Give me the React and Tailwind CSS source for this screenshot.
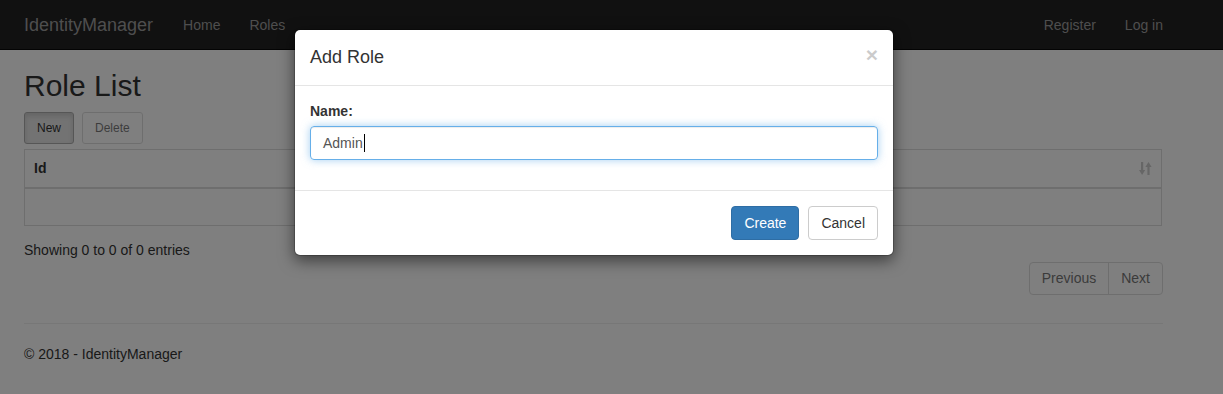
export default function App() {
  return (
    <div className="relative w-[1223px] h-[394px] overflow-hidden bg-white font-['Liberation_Sans',Arial,sans-serif] text-[14px] text-[#333]">
      {/* Navbar */}
      <div className="h-[50px] bg-[#222] border-b border-[#080808] flex items-center justify-between pl-[24px] pr-[60px]">
        <div className="flex items-center">
          <span className="text-[18px] leading-[20px] text-[#9d9d9d]">IdentityManager</span>
          <div className="flex items-center gap-[29px] ml-[30px] text-[14px] leading-[20px] text-[#9d9d9d]">
            <span>Home</span>
            <span>Roles</span>
          </div>
        </div>
        <div className="flex items-center gap-[29px] text-[14px] leading-[20px] text-[#9d9d9d]">
          <span>Register</span>
          <span>Log in</span>
        </div>
      </div>

      {/* Content */}
      <div className="pl-[24px] pr-[60px]">
        <h2 className="mt-[19px] text-[30px] leading-[33px] font-medium text-[#333]">Role List</h2>
        <div className="mt-[10px] flex gap-[8px]">
          <div className="h-[32px] px-[12px] flex items-center text-[12px] border border-[#adadad] rounded-[3px] bg-[#e6e6e6] shadow-[inset_0_3px_5px_rgba(0,0,0,0.125)] text-[#333]">New</div>
          <div className="h-[32px] px-[12px] flex items-center text-[12px] border border-[#ccc] rounded-[3px] bg-white text-[#333] opacity-65">Delete</div>
        </div>
        <div className="mt-[5px] mr-[1px] border border-[#ddd]">
          <div className="h-[39px] border-b-2 border-[#ddd] flex items-center justify-between pl-[9px] pr-[9px]">
            <span className="font-bold">Id</span>
            <svg width="13" height="15" viewBox="0 0 13 15" className="text-[#ccc]">
              <g fill="currentColor">
                <rect x="2" y="1" width="2.2" height="10" />
                <polygon points="0,9 6.2,9 3.1,14" />
                <rect x="8.4" y="4" width="2.2" height="10" />
                <polygon points="6.4,6 12.6,6 9.5,1" />
              </g>
            </svg>
          </div>
          <div className="h-[36px]"></div>
        </div>
        <div className="mt-[14px] leading-[20px]">Showing 0 to 0 of 0 entries</div>
        <div className="mt-[2px] flex justify-end">
          <div className="flex h-[33px] border border-[#ddd] rounded-[4px] text-[#777]">
            <div className="px-[12px] flex items-center border-r border-[#ddd]">Previous</div>
            <div className="px-[12px] flex items-center">Next</div>
          </div>
        </div>
        <div className="mt-[28px] border-t border-[#eee]"></div>
        <div className="mt-[20px] leading-[20px]">© 2018 - IdentityManager</div>
      </div>

      {/* Backdrop */}
      <div className="absolute inset-0 bg-black/50"></div>

      {/* Modal */}
      <div className="absolute left-[294px] top-[29px] w-[600px] bg-white rounded-[6px] border border-black/20 shadow-[0_5px_15px_rgba(0,0,0,0.5)] bg-clip-padding">
        <div className="p-[15px] border-b border-[#e5e5e5] flex justify-between items-start">
          <span className="text-[18px] leading-[25px] font-medium text-[#333]">Add Role</span>
          <span className="text-[21px] leading-[21px] font-bold text-black opacity-20 mt-[-1px]">×</span>
        </div>
        <div className="p-[15px]">
          <div className="font-bold leading-[20px] mb-[5px]">Name:</div>
          <div className="h-[34px] border border-[#66afe9] rounded-[4px] px-[12px] flex items-center text-[#555] shadow-[inset_0_1px_1px_rgba(0,0,0,0.075),0_0_8px_rgba(102,175,233,0.6)] mb-[15px]">
            <span>Admin</span>
            <span className="inline-block w-[1px] h-[18px] bg-black ml-[1px]"></span>
          </div>
        </div>
        <div className="border-t border-[#e5e5e5] p-[15px] flex justify-end gap-[9px]">
          <div className="h-[34px] px-[12px] flex items-center rounded-[4px] bg-[#337ab7] border border-[#2e6da4] text-white">Create</div>
          <div className="h-[34px] px-[12px] flex items-center rounded-[4px] bg-white border border-[#ccc] text-[#333]">Cancel</div>
        </div>
      </div>
    </div>
  );
}
